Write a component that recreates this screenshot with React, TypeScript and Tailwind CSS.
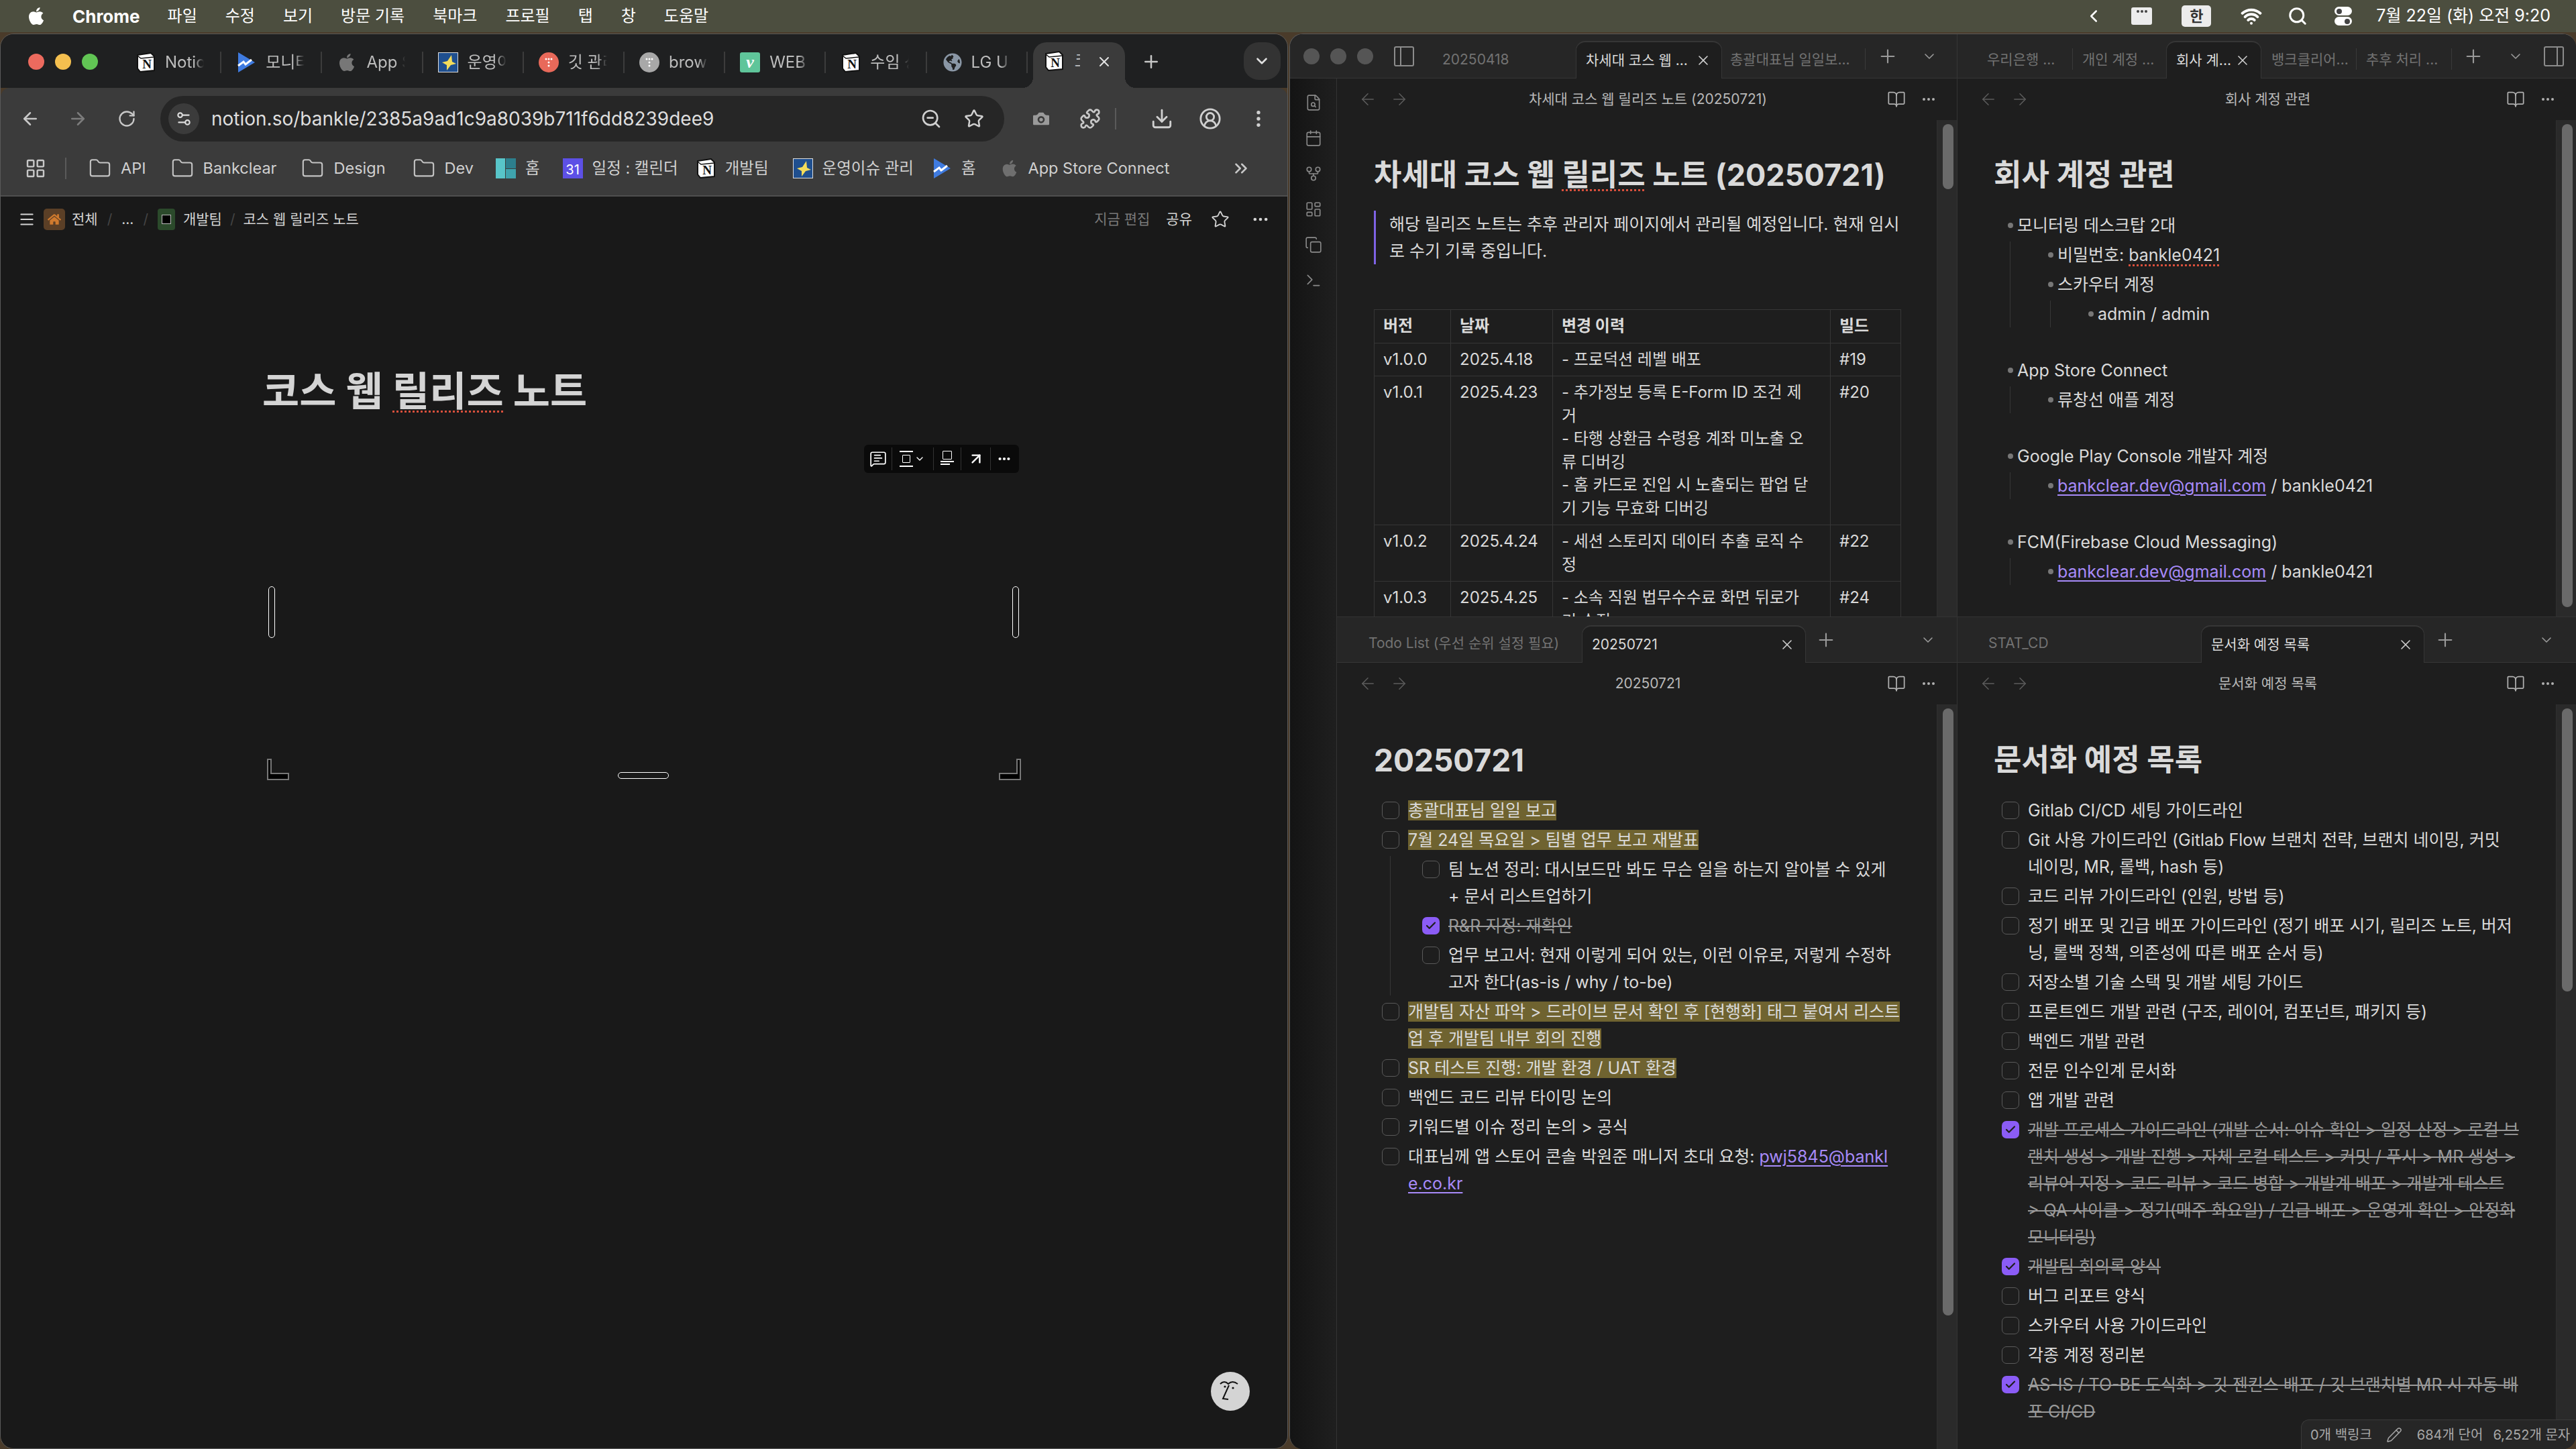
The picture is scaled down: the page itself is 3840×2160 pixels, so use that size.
import type { ReactNode } from "react";
import {
  ArrowLeft,
  ArrowRight,
  ArrowUpRight,
  BookOpen,
  Calendar,
  Camera,
  Check,
  ChevronDown,
  ChevronLeft,
  ChevronsRight,
  CircleUserRound,
  Copy,
  Download,
  Ellipsis,
  EllipsisVertical,
  FileSearch,
  Folder,
  GitFork,
  LayoutDashboard,
  LayoutGrid,
  Menu,
  MessageSquareText,
  Pencil,
  Plus,
  Puzzle,
  RotateCw,
  Search,
  Settings2,
  Star,
  Terminal,
  Wifi,
  X,
  ZoomOut,
} from "lucide-react";
import { FaApple, FaGlobeAmericas, FaHome } from "react-icons/fa";

const NotionIcon = ({ size = 30 }: { size?: number }) => (
  <svg width={size} height={size} viewBox="0 0 30 30" className="shrink-0">
    <path d="M3 4 L23 1 L28 6 V27 L7 29 L3 24 Z" fill="#fff" stroke="#111" strokeWidth="2" />
    <path d="M3 5 L8 9 L28 7" fill="none" stroke="#111" strokeWidth="1.5" />
    <text x="17" y="24" textAnchor="middle" fontFamily="Liberation Serif, serif" fontWeight="700" fontSize="19" fill="#111">
      N
    </text>
  </svg>
);

const MonitorIcon = ({ size = 30 }: { size?: number }) => (
  <svg width={size} height={size} viewBox="0 0 30 30" className="shrink-0">
    <path d="M3 0 L28 15 L3 30 Z" fill="#3f7be0" />
    <path d="M3 20 L11 14 L14 18 L23 11" fill="none" stroke="#fff" strokeWidth="3" />
  </svg>
);

const StarImageIcon = ({ size = 30 }: { size?: number }) => (
  <svg width={size} height={size} viewBox="0 0 30 30" className="shrink-0">
    <rect x="0.5" y="0.5" width="29" height="29" fill="#1f4f8f" stroke="#ddd" />
    <path d="M20 4 L21 14 L27 17 L19 19 L13 27 L13 19 L6 15 L14 13 Z" fill="#f4dc5a" />
  </svg>
);

const DotsFavicon = ({ color }: { color: string }) => (
  <svg width={30} height={30} viewBox="0 0 30 30" className="shrink-0">
    <circle cx="15" cy="15" r="15" fill={color} />
    <g fill="#fff">
      <circle cx="11" cy="10" r="1.5" />
      <circle cx="15" cy="10" r="1.5" />
      <circle cx="19" cy="10" r="1.5" />
      <circle cx="15" cy="15" r="1.5" />
      <circle cx="15" cy="20" r="1.5" />
    </g>
  </svg>
);

const tabs: { icon: ReactNode; label: string }[] = [
  { icon: <NotionIcon />, label: "Notion" },
  { icon: <MonitorIcon />, label: "모니터링" },
  { icon: <FaApple size={30} color="#777" className="shrink-0" />, label: "App Store" },
  { icon: <StarImageIcon />, label: "운영이슈" },
  { icon: <DotsFavicon color="#e8695a" />, label: "깃 관리" },
  { icon: <DotsFavicon color="#a8a8a8" />, label: "browser" },
  {
    icon: (
      <span className="flex h-[30px] w-[30px] shrink-0 items-center justify-center rounded-[3px] bg-[#5fc59a] font-['Liberation_Serif'] text-[26px] leading-none font-bold text-white italic">
        v
      </span>
    ),
    label: "WEB",
  },
  { icon: <NotionIcon />, label: "수임 상담" },
  { icon: <FaGlobeAmericas size={28} color="#8a97a6" className="shrink-0" />, label: "LG U+" },
];

const bookmarks: { icon: ReactNode; label: string; gap: string }[] = [
  { icon: <Folder size={34} strokeWidth={1.5} color="#c4c4c4" />, label: "API", gap: "mr-[37px]" },
  { icon: <Folder size={34} strokeWidth={1.5} color="#c4c4c4" />, label: "Bankclear", gap: "mr-[37px]" },
  { icon: <Folder size={34} strokeWidth={1.5} color="#c4c4c4" />, label: "Design", gap: "mr-[40px]" },
  { icon: <Folder size={34} strokeWidth={1.5} color="#c4c4c4" />, label: "Dev", gap: "mr-[33px]" },
  {
    icon: (
      <span className="grid h-[30px] w-[30px] grid-cols-2 gap-[1px] bg-[#3c3c3c]">
        <span className="row-span-2 bg-[#58c5c9]" />
        <span className="bg-[#2d7f8d]" />
        <span className="bg-[#3fa3ad]" />
      </span>
    ),
    label: "홈",
    gap: "mr-[34px]",
  },
  {
    icon: (
      <span className="flex h-[30px] w-[30px] items-end justify-center bg-[#5d50e6] pb-[1px] font-['Inter'] text-[20px] leading-[24px] text-white">
        31
      </span>
    ),
    label: "일정 : 캘린더",
    gap: "mr-[26px]",
  },
  { icon: <NotionIcon />, label: "개발팀", gap: "mr-[36px]" },
  { icon: <StarImageIcon />, label: "운영이슈 관리", gap: "mr-[27px]" },
  { icon: <MonitorIcon />, label: "홈", gap: "mr-[36px]" },
  { icon: <FaApple size={28} color="#6f6f6f" />, label: "App Store Connect", gap: "" },
];

const menuItems = ["파일", "수정", "보기", "방문 기록", "북마크", "프로필", "탭", "창", "도움말"];

const MenuBar = () => (
  <header className="flex h-[48px] shrink-0 items-center bg-[#4c4e3f] pr-[38px] pl-[39px] text-[24px] text-white">
    <FaApple size={30} />
    <span className="ml-[39px] text-[26px] font-bold">Chrome</span>
    <nav className="ml-[41px] flex gap-[42px]">
      {menuItems.map((m) => (
        <span key={m}>{m}</span>
      ))}
    </nav>
    <div className="ml-auto flex items-center">
      <ChevronLeft size={30} strokeWidth={2} />
      <span className="ml-[41px] flex h-[26px] w-[31px] items-start justify-center gap-[2px] rounded-[3px] bg-[#ececec] pt-[4px]">
        <i className="h-[4px] w-[4px] rounded-full bg-[#444]" />
        <i className="h-[4px] w-[4px] rounded-full bg-[#444]" />
        <i className="h-[4px] w-[4px] rounded-full bg-[#444]" />
      </span>
      <span className="ml-[44px] flex h-[32px] w-[44px] items-center justify-center rounded-[5px] bg-[#ececec] text-[22px] font-semibold text-[#333]">
        한
      </span>
      <Wifi size={32} strokeWidth={3} className="ml-[44px]" />
      <Search size={30} strokeWidth={2.4} className="ml-[38px]" />
      <span className="ml-[40px] flex flex-col gap-[2px]">
        <i className="flex h-[13px] w-[26px] items-center justify-start rounded-full bg-white pl-[3px]">
          <b className="h-[8px] w-[8px] rounded-full bg-[#444]" />
        </i>
        <i className="flex h-[13px] w-[26px] items-center justify-end rounded-full bg-white pr-[3px]">
          <b className="h-[8px] w-[8px] rounded-full bg-[#444]" />
        </i>
      </span>
      <span className="ml-[36px] text-[25px]">7월 22일 (화) 오전 9:20</span>
    </div>
  </header>
);

const BrowserTabs = () => (
  <div className="flex h-[80px] shrink-0 bg-[#1f2021] pl-[41px]">
    <div className="mt-[29px] mr-[34px] flex h-[24px] gap-[16px]">
      <span className="h-[24px] w-[24px] rounded-full bg-[#ec6a5e]" />
      <span className="h-[24px] w-[24px] rounded-full bg-[#f4bf4f]" />
      <span className="h-[24px] w-[24px] rounded-full bg-[#61c554]" />
    </div>
    {tabs.map((t, i) => (
      <div key={t.label} className="mt-[26px] flex h-[32px] w-[150.2px] items-center gap-[14px] border-r-2 border-[#3c3c3c] pl-[22px]">
        <span className={i === 8 ? "ml-[2px]" : ""}>{t.icon}</span>
        <span className="w-[58px] overflow-hidden text-[24px] whitespace-nowrap text-[#bdbdbd] [mask-image:linear-gradient(to_right,black_75%,transparent)]">
          {t.label}
        </span>
      </div>
    ))}
    <div className="relative mt-[12px] ml-[8px] flex h-[68px] w-[137px] items-start gap-[16px] rounded-t-[20px] bg-[#3b3b3b] pt-[13px] pl-[16px]">
      <span className="absolute bottom-0 -left-[16px] h-[16px] w-[16px] bg-[radial-gradient(circle_at_0_0,transparent_16px,#3b3b3b_16px)]" />
      <span className="absolute -right-[16px] bottom-0 h-[16px] w-[16px] bg-[radial-gradient(circle_at_100%_0,transparent_16px,#3b3b3b_16px)]" />
      <NotionIcon />
      <span className="w-[8px] overflow-hidden text-[24px] leading-[30px] text-[#bdbdbd]">코</span>
      <X size={24} strokeWidth={2} color="#e4e4e4" className="mt-[4px] ml-[8px]" />
    </div>
    <Plus size={30} strokeWidth={2} color="#c8c8c8" className="mt-[26px] ml-[24px]" />
    <span className="mt-[12px] ml-[123px] flex h-[56px] w-[55px] items-center justify-center rounded-[22px] bg-[#333]">
      <ChevronDown size={26} strokeWidth={2.4} color="#e0e0e0" />
    </span>
  </div>
);

const UrlRow = () => (
  <div className="flex h-[92px] items-center pl-[29px]">
    <ArrowLeft size={30} color="#c8c8c8" strokeWidth={2} />
    <ArrowRight size={30} color="#7c7c7c" strokeWidth={2} className="ml-[41px]" />
    <RotateCw size={28} color="#c8c8c8" strokeWidth={2} className="ml-[44px]" />
    <div className="ml-[36px] flex h-[68px] w-[1258px] items-center rounded-full bg-[#262626] pr-[30px] pl-[12px]">
      <span className="flex h-[46px] w-[46px] items-center justify-center rounded-full bg-[#3b3b3b]">
        <Settings2 size={26} color="#dcdcdc" />
      </span>
      <span className="ml-[18px] text-[28px] text-[#dedede]">notion.so/bankle/2385a9ad1c9a8039b711f6dd8239dee9</span>
      <ZoomOut size={32} color="#d0d0d0" className="ml-auto" />
      <Star size={30} color="#d0d0d0" className="ml-[33px]" />
    </div>
    <Camera size={32} color="#3b3b3b" fill="#9a9a9a" className="ml-[39px]" />
    <Puzzle size={32} color="#c8c8c8" className="ml-[41px]" />
    <span className="ml-[21px] h-[32px] w-[2px] bg-[#5a5a5a]" />
    <Download size={34} color="#d0d0d0" className="ml-[51px]" />
    <CircleUserRound size={34} color="#d0d0d0" className="ml-[38px]" />
    <EllipsisVertical size={32} color="#d0d0d0" className="ml-[39px]" />
  </div>
);

const BookmarkRow = () => (
  <div className="flex h-[56px] items-center pl-[36px]">
    <LayoutGrid size={32} color="#c8c8c8" strokeWidth={1.8} />
    <span className="mr-[33px] ml-[28px] h-[32px] w-[2px] bg-[#5a5a5a]" />
    {bookmarks.map((b, i) => (
      <span key={`${b.label}${i}`} className={`flex items-center gap-[14px] text-[23.5px] text-[#d0d0d0] ${b.gap}`}>
        {b.icon}
        {b.label}
      </span>
    ))}
    <ChevronsRight size={30} color="#c8c8c8" className="ml-[92px]" />
  </div>
);

const Handle = ({ className }: { className: string }) => (
  <div className={`absolute rounded-full border border-white ${className}`} />
);

const ToolbarSlot = ({ children, className }: { children: ReactNode; className: string }) => (
  <span className={`flex h-[34px] items-center justify-center border-r border-[#333] ${className}`}>{children}</span>
);

const NotionPage = () => (
  <main className="relative flex-1 bg-[#191919] text-[#d4d4d4]">
    <div className="flex h-[68px] items-center px-[26px] text-[21px]">
      <Menu size={26} strokeWidth={1.8} />
      <span className="ml-[12px] flex h-[32px] w-[32px] items-center justify-center rounded-[5px] bg-[#5b3f26]">
        <FaHome size={20} color="#cf7a2e" />
      </span>
      <span className="ml-[10px]">전체</span>
      <span className="mx-[14px] text-[#444]">/</span>
      <span>...</span>
      <span className="mx-[14px] text-[#444]">/</span>
      <span className="flex h-[32px] w-[26px] items-center justify-center rounded-[4px] bg-[#2b4a2b]">
        <span className="h-[14px] w-[14px] border border-[#bbb] bg-black" />
      </span>
      <span className="ml-[12px]">개발팀</span>
      <span className="mx-[12px] text-[#444]">/</span>
      <span>코스 웹 릴리즈 노트</span>
      <div className="ml-auto flex items-center">
        <span className="text-[#7a7a7a]">지금 편집</span>
        <span className="ml-[24px]">공유</span>
        <Star size={28} strokeWidth={1.6} className="ml-[28px]" />
        <Ellipsis size={28} className="ml-[32px]" />
      </div>
    </div>
    <h1 className="pt-[186px] pl-[390px] text-[60px] leading-[72px] font-bold">
      코스 웹{" "}
      <span className="underline decoration-[#d9503c] decoration-dotted decoration-[3px] underline-offset-[7px]">릴리즈</span> 노트
    </h1>

    <div className="absolute top-[370px] left-[1287px] flex h-[42px] w-[231px] items-center rounded-[6px] bg-[#0a0a0a] px-[2px] text-white">
      <ToolbarSlot className="w-[40px]">
        <MessageSquareText size={26} strokeWidth={1.6} />
      </ToolbarSlot>
      <ToolbarSlot className="w-[62px] gap-[2px]">
        <span className="flex h-[24px] w-[20px] flex-col items-center justify-between">
          <i className="h-[2px] w-[20px] bg-white" />
          <i className="h-[12px] w-[12px] rounded-[1px] border border-white" />
          <i className="h-[2px] w-[20px] bg-white" />
        </span>
        <ChevronDown size={16} />
      </ToolbarSlot>
      <ToolbarSlot className="w-[42px]">
        <span className="flex h-[24px] w-[20px] flex-col items-center gap-[2px]">
          <i className="h-[13px] w-[14px] rounded-[1px] border border-white" />
          <i className="h-[2px] w-[20px] bg-white" />
          <i className="h-[2px] w-[14px] self-start bg-white" />
        </span>
      </ToolbarSlot>
      <ToolbarSlot className="w-[44px]">
        <ArrowUpRight size={26} strokeWidth={2.2} />
      </ToolbarSlot>
      <span className="flex w-[40px] justify-center">
        <Ellipsis size={22} strokeWidth={2.6} />
      </span>
    </div>

    <Handle className="top-[581px] left-[399px] h-[77px] w-[10px]" />
    <Handle className="top-[581px] left-[1508px] h-[77px] w-[10px]" />
    <Handle className="top-[858px] left-[920px] h-[10px] w-[76px]" />
    <svg className="absolute top-[838px] left-[397px]" width="34" height="32" viewBox="0 0 34 32">
      <path d="M1 1 H6 V22 H32 V31 H1 Z" fill="#000" stroke="#777" strokeWidth="2" />
    </svg>
    <svg className="absolute top-[838px] left-[1487px]" width="34" height="32" viewBox="0 0 34 32">
      <path d="M33 1 H28 V22 H2 V31 H33 Z" fill="#000" stroke="#777" strokeWidth="2" />
    </svg>

    <div className="absolute right-[56px] bottom-[56px] flex h-[58px] w-[58px] items-center justify-center rounded-full bg-[#d4d4d4]">
      <svg width="34" height="34" viewBox="0 0 34 34" fill="none" stroke="#111" strokeWidth="2">
        <path d="M2 6 Q8 0 14 6 Q20 0 28 6" />
        <path d="M15 8 L6 28 L14 29" />
        <circle cx="9" cy="10" r="1.6" fill="#111" stroke="none" />
        <circle cx="21" cy="12" r="1.6" fill="#111" stroke="none" />
      </svg>
    </div>
  </main>
);

const BrowserWindow = () => (
  <section className="flex h-full w-[1920px] shrink-0 flex-col overflow-hidden rounded-t-[20px] rounded-b-[20px] border border-[#5a5a5a]">
    <BrowserTabs />
    <div className="h-[162px] shrink-0 rounded-t-[14px] border-b-2 border-[#4f4f4f] bg-[#3b3b3b]">
      <UrlRow />
      <BookmarkRow />
    </div>
    <NotionPage />
  </section>
);

const TabLabel = ({ children, className = "" }: { children: ReactNode; className?: string }) => (
  <span className={`mt-[10px] text-[21px] whitespace-nowrap text-[#727272] ${className}`}>{children}</span>
);

const ActiveTab = ({ label, className }: { label: string; className: string }) => (
  <div className={`flex h-[56px] items-center justify-between self-end rounded-t-[14px] border-x border-t-2 border-[#363636] bg-[#1e1e1e] -mb-px pr-[15px] pl-[14px] ${className}`}>
    <span className="text-[21px] whitespace-nowrap text-[#dadada]">{label}</span>
    <X size={24} strokeWidth={1.6} color="#cfcfcf" />
  </div>
);

const Sep = ({ className = "" }: { className?: string }) => <span className={`mt-[8px] h-[32px] w-px bg-[#3a3a3a] ${className}`} />;

const NavRow = ({ title }: { title: string }) => (
  <div className="flex h-[62px] shrink-0 items-center pr-[30px] pl-[32px]">
    <ArrowLeft size={28} strokeWidth={1.3} color="#5c5c5c" />
    <ArrowRight size={28} strokeWidth={1.3} color="#5c5c5c" className="ml-[19px]" />
    <span className="flex-1 text-center text-[21px] text-[#b8b8b8]">{title}</span>
    <BookOpen size={28} strokeWidth={1.5} color="#b0b0b0" />
    <Ellipsis size={24} strokeWidth={2} color="#b0b0b0" className="ml-[22px]" />
  </div>
);

const Scroll = ({ thumb }: { thumb: string }) => (
  <div className="w-[30px] shrink-0 border-l border-[#2f2f2f] bg-[#2a2a2a] pt-[6px] pl-[8px]">
    <div className={`w-[16px] rounded-full bg-[#6a6a6a] ${thumb}`} />
  </div>
);

const PageTitle = ({ children, className = "mb-[25px] text-[45px]" }: { children: ReactNode; className?: string }) => (
  <h1 className={`leading-[60px] font-bold text-[#dadada] ${className}`}>{children}</h1>
);

const misspelled = "underline decoration-[#d9503c] decoration-dotted decoration-[3px] underline-offset-[5px]";

const rows = [
  { v: "v1.0.0", d: "2025.4.18", c: ["- 프로덕션 레벨 배포"], b: "#19" },
  {
    v: "v1.0.1",
    d: "2025.4.23",
    c: [
      "- 추가정보 등록 E-Form ID 조건 제",
      "거",
      "- 타행 상환금 수령용 계좌 미노출 오",
      "류 디버깅",
      "- 홈 카드로 진입 시 노출되는 팝업 닫",
      "기 기능 무효화 디버깅",
    ],
    b: "#20",
  },
  { v: "v1.0.2", d: "2025.4.24", c: ["- 세션 스토리지 데이터 추출 로직 수", "정"], b: "#22" },
  { v: "v1.0.3", d: "2025.4.25", c: ["- 소속 직원 법무수수료 화면 뒤로가", "기 수정"], b: "#24" },
];

const cell = "border border-[#363636] px-[13px] py-[7px] align-top";

const ReleaseNote = () => (
  <div className="flex-1 overflow-hidden pt-[52px] pl-[55px]">
    <PageTitle className="mb-[23px] text-[45px]">
      차세대 코스 웹 <span className={misspelled}>릴리즈</span> 노트 (20250721)
    </PageTitle>
    <blockquote className="w-[785px] border-l-[3px] border-[#7f63e6] pl-[20px] text-[25px] leading-[40px] whitespace-nowrap text-[#dadada]">
      해당 릴리즈 노트는 추후 관리자 페이지에서 관리될 예정입니다. 현재 임시
      <br />로 수기 기록 중입니다.
    </blockquote>
    <table className="mt-[67px] w-[785px] table-fixed border-collapse text-[24px] leading-[34.5px] whitespace-nowrap text-[#dadada]">
      <colgroup>
        <col className="w-[114px]" />
        <col className="w-[152px]" />
        <col className="w-[414px]" />
        <col className="w-[105px]" />
      </colgroup>
      <thead>
        <tr className="font-bold">
          <th className={`${cell} text-left`}>버전</th>
          <th className={`${cell} text-left`}>날짜</th>
          <th className={`${cell} text-left`}>변경 이력</th>
          <th className={`${cell} text-left`}>빌드</th>
        </tr>
      </thead>
      <tbody>
        {rows.map((r) => (
          <tr key={r.v}>
            <td className={cell}>{r.v}</td>
            <td className={cell}>{r.d}</td>
            <td className={cell}>
              {r.c.map((line) => (
                <div key={line}>{line}</div>
              ))}
            </td>
            <td className={cell}>{r.b}</td>
          </tr>
        ))}
      </tbody>
    </table>
  </div>
);

const Bullet = ({ children, nested }: { children: ReactNode; nested?: ReactNode }) => (
  <li>
    <div className="relative mb-[4px] pl-[14px]">
      <i className="absolute top-[16px] left-0 h-[8px] w-[8px] rounded-full bg-[#777]" />
      {children}
    </div>
    {nested && <ul className="ml-[3px] border-l border-[#363636] pl-[56px]">{nested}</ul>}
  </li>
);

const accountLink = "text-[#a88bfa] underline underline-offset-[4px]";

const AccountNote = () => (
  <div className="flex-1 overflow-hidden pt-[52px] pl-[54px] text-[25px] leading-[40px] text-[#dadada]">
    <PageTitle>회사 계정 관련</PageTitle>
    <ul className="ml-[21px]">
      <Bullet
        nested={
          <>
            <Bullet>
              비밀번호: <span className={misspelled}>bankle0421</span>
            </Bullet>
            <Bullet nested={<Bullet>admin / admin</Bullet>}>스카우터 계정</Bullet>
          </>
        }
      >
        모니터링 데스크탑 2대
      </Bullet>
      <div className="h-[40px]" />
      <Bullet nested={<Bullet>류창선 애플 계정</Bullet>}>App Store Connect</Bullet>
      <div className="h-[40px]" />
      <Bullet
        nested={
          <Bullet>
            <span className={accountLink}>bankclear.dev@gmail.com</span> / bankle0421
          </Bullet>
        }
      >
        Google Play Console 개발자 계정
      </Bullet>
      <div className="h-[40px]" />
      <Bullet
        nested={
          <Bullet>
            <span className={accountLink}>bankclear.dev@gmail.com</span> / bankle0421
          </Bullet>
        }
      >
        FCM(Firebase Cloud Messaging)
      </Bullet>
    </ul>
  </div>
);

const Todo = ({
  children,
  done,
  nested,
}: {
  children: ReactNode;
  done?: boolean;
  nested?: ReactNode;
}) => (
  <div>
    <div className="mb-[4px] flex gap-[13px]">
      {done ? (
        <span className="mt-[7px] flex h-[26px] w-[26px] shrink-0 items-center justify-center rounded-[7px] bg-[#8b5cf6]">
          <Check size={18} strokeWidth={3} color="#1e1e1e" />
        </span>
      ) : (
        <span className="mt-[7px] h-[26px] w-[26px] shrink-0 rounded-[7px] border border-[#5a5a5a]" />
      )}
      <div className={`whitespace-nowrap ${done ? "text-[#9a9a9a] line-through" : ""}`}>{children}</div>
    </div>
    {nested && <div className="ml-[12px] border-l border-[#363636] pl-[47px]">{nested}</div>}
  </div>
);

const Mark = ({ children }: { children: ReactNode }) => (
  <mark className="bg-[#6f6330] text-[#dadada] [box-decoration-break:clone]">{children}</mark>
);

const DailyNote = () => (
  <div className="flex-1 overflow-hidden pt-[53px] pl-[55px] text-[25px] leading-[40px] text-[#dadada]">
    <PageTitle className="mb-[25px] text-[46px]">20250721</PageTitle>
    <div className="ml-[12px]">
      <Todo>
        <Mark>총괄대표님 일일 보고</Mark>
      </Todo>
      <Todo
        nested={
          <>
            <Todo>
              팀 노션 정리: 대시보드만 봐도 무슨 일을 하는지 알아볼 수 있게
              <br />+ 문서 리스트업하기
            </Todo>
            <Todo done>R&amp;R 지정: 재확인</Todo>
            <Todo>
              업무 보고서: 현재 이렇게 되어 있는, 이런 이유로, 저렇게 수정하
              <br />
              고자 한다(as-is / why / to-be)
            </Todo>
          </>
        }
      >
        <Mark>7월 24일 목요일 &gt; 팀별 업무 보고 재발표</Mark>
      </Todo>
      <Todo>
        <Mark>
          개발팀 자산 파악 &gt; 드라이브 문서 확인 후 [현행화] 태그 붙여서 리스트
          <br />
          업 후 개발팀 내부 회의 진행
        </Mark>
      </Todo>
      <Todo>
        <Mark>SR 테스트 진행: 개발 환경 / UAT 환경</Mark>
      </Todo>
      <Todo>백엔드 코드 리뷰 타이밍 논의</Todo>
      <Todo>키워드별 이슈 정리 논의 &gt; 공식</Todo>
      <Todo>
        대표님께 앱 스토어 콘솔 박원준 매니저 초대 요청: <span className={accountLink}>pwj5845@bankl</span>
        <br />
        <span className={accountLink}>e.co.kr</span>
      </Todo>
    </div>
  </div>
);

const docItems: { lines: string[]; done?: boolean }[] = [
  { lines: ["Gitlab CI/CD 세팅 가이드라인"] },
  { lines: ["Git 사용 가이드라인 (Gitlab Flow 브랜치 전략, 브랜치 네이밍, 커밋", "네이밍, MR, 롤백, hash 등)"] },
  { lines: ["코드 리뷰 가이드라인 (인원, 방법 등)"] },
  { lines: ["정기 배포 및 긴급 배포 가이드라인 (정기 배포 시기, 릴리즈 노트, 버저", "닝, 롤백 정책, 의존성에 따른 배포 순서 등)"] },
  { lines: ["저장소별 기술 스택 및 개발 세팅 가이드"] },
  { lines: ["프론트엔드 개발 관련 (구조, 레이어, 컴포넌트, 패키지 등)"] },
  { lines: ["백엔드 개발 관련"] },
  { lines: ["전문 인수인계 문서화"] },
  { lines: ["앱 개발 관련"] },
  {
    done: true,
    lines: [
      "개발 프로세스 가이드라인 (개발 순서: 이슈 확인 > 일정 산정 > 로컬 브",
      "랜치 생성 > 개발 진행 > 자체 로컬 테스트 > 커밋 / 푸시 > MR 생성 >",
      "리뷰어 지정 > 코드 리뷰 > 코드 병합 > 개발계 배포 > 개발계 테스트",
      "> QA 사이클 > 정기(매주 화요일) / 긴급 배포 > 운영계 확인 > 안정화",
      "모니터링)",
    ],
  },
  { done: true, lines: ["개발팀 회의록 양식"] },
  { lines: ["버그 리포트 양식"] },
  { lines: ["스카우터 사용 가이드라인"] },
  { lines: ["각종 계정 정리본"] },
  { done: true, lines: ["AS-IS / TO-BE 도식화 > 깃 젠킨스 배포 / 깃 브랜치별 MR 시 자동 배", "포 CI/CD"] },
];

const DocList = () => (
  <div className="flex-1 overflow-hidden pt-[53px] pl-[54px] text-[25px] leading-[40px] text-[#dadada]">
    <PageTitle>문서화 예정 목록</PageTitle>
    <div className="ml-[12px]">
      {docItems.map((item) => (
        <Todo key={item.lines[0]} done={item.done}>
          {item.lines.map((line) => (
            <div key={line}>{line}</div>
          ))}
        </Todo>
      ))}
    </div>
  </div>
);

const TabHeaderBottom = "border-b border-[#363636]";

const ObsidianWindow = () => (
  <section className="ml-[2px] flex h-full flex-1 flex-col overflow-hidden rounded-t-[20px] rounded-b-[20px] border-t border-l border-[#5a5a5a] bg-[#1e1e1e]">
    {/* window title row: tab strips of the two upper panes */}
    <div className="flex h-[66px] shrink-0">
      <div className={`flex w-[995px] items-center border-r border-[#333] bg-[#262626] pl-[20px] ${TabHeaderBottom}`}>
        <span className="h-[24px] w-[24px] rounded-full bg-[#555]" />
        <span className="ml-[16px] h-[24px] w-[24px] rounded-full bg-[#555]" />
        <span className="ml-[16px] h-[24px] w-[24px] rounded-full bg-[#555]" />
        <span className="ml-[31px] flex h-[30px] w-[30px] rounded-[3px] border-2 border-[#8c8c8c]">
          <i className="w-[9px] border-r-2 border-[#8c8c8c]" />
        </span>
        <TabLabel className="ml-[42px] w-[199px]">20250418</TabLabel>
        <ActiveTab label="차세대 코스 웹 ..." className="w-[218px]" />
        <TabLabel className="ml-[12px] w-[201px]">총괄대표님 일일보...</TabLabel>
        <Sep />
        <Plus size={32} strokeWidth={1.6} color="#9a9a9a" className="ml-[17px]" />
        <ChevronDown size={24} strokeWidth={1.6} color="#9a9a9a" className="ml-[34px]" />
      </div>
      <div className={`flex flex-1 items-center bg-[#262626] pl-[44px] ${TabHeaderBottom}`}>
        <TabLabel className="w-[127px]">우리은행 ...</TabLabel>
        <Sep />
        <TabLabel className="ml-[14px] w-[125px]">개인 계정 ...</TabLabel>
        <ActiveTab label="회사 계..." className="w-[142px]" />
        <TabLabel className="ml-[15px] w-[126px]">뱅크클리어...</TabLabel>
        <Sep />
        <TabLabel className="ml-[14px] w-[127px]">추후 처리 ...</TabLabel>
        <Sep />
        <Plus size={32} strokeWidth={1.6} color="#9a9a9a" className="ml-[16px]" />
        <ChevronDown size={24} strokeWidth={1.6} color="#9a9a9a" className="ml-[35px]" />
        <span className="ml-[30px] flex h-[30px] w-[30px] justify-end rounded-[3px] border-2 border-[#8c8c8c]">
          <i className="w-[9px] border-l-2 border-[#8c8c8c]" />
        </span>
      </div>
    </div>

    <div className="flex min-h-0 flex-1">
      {/* ribbon */}
      <aside className="flex w-[70px] shrink-0 flex-col items-center gap-[27px] border-r border-[#333] bg-linear-to-r from-[#141414] to-[#1f1f1f] pt-[23px] text-[#8a8a8a]">
        <FileSearch size={26} strokeWidth={1.5} />
        <Calendar size={26} strokeWidth={1.5} />
        <GitFork size={26} strokeWidth={1.5} />
        <LayoutDashboard size={26} strokeWidth={1.5} />
        <Copy size={26} strokeWidth={1.5} />
        <Terminal size={26} strokeWidth={1.5} />
      </aside>

      <div className="grid min-w-0 flex-1 grid-cols-[925px_1fr] grid-rows-[803px_1fr]">
        <div className="flex min-h-0 flex-col overflow-hidden border-r border-b border-[#333]">
          <NavRow title="차세대 코스 웹 릴리즈 노트 (20250721)" />
          <div className="flex min-h-0 flex-1">
            <ReleaseNote />
            <Scroll thumb="h-[97px]" />
          </div>
        </div>
        <div className="flex min-h-0 flex-col overflow-hidden border-b border-[#333]">
          <NavRow title="회사 계정 관련" />
          <div className="flex min-h-0 flex-1">
            <AccountNote />
            <Scroll thumb="h-[720px]" />
          </div>
        </div>
        <div className="flex min-h-0 flex-col overflow-hidden border-r border-[#333]">
          <div className={`flex h-[68px] shrink-0 items-center bg-[#262626] pl-[47px] ${TabHeaderBottom}`}>
            <TabLabel className="w-[318px]">Todo List (우선 순위 설정 필요)</TabLabel>
            <ActiveTab label="20250721" className="w-[334px]" />
            <Plus size={32} strokeWidth={1.6} color="#9a9a9a" className="ml-[14px]" />
            <ChevronDown size={24} strokeWidth={1.6} color="#9a9a9a" className="ml-[124px]" />
          </div>
          <NavRow title="20250721" />
          <div className="flex min-h-0 flex-1">
            <DailyNote />
            <Scroll thumb="h-[905px]" />
          </div>
        </div>
        <div className="relative flex min-h-0 flex-col overflow-hidden">
          <div className={`flex h-[68px] shrink-0 items-center bg-[#262626] pl-[46px] ${TabHeaderBottom}`}>
            <TabLabel className="w-[317px]">STAT_CD</TabLabel>
            <ActiveTab label="문서화 예정 목록" className="w-[333px]" />
            <Plus size={32} strokeWidth={1.6} color="#9a9a9a" className="ml-[15px]" />
            <ChevronDown size={24} strokeWidth={1.6} color="#9a9a9a" className="ml-[123px]" />
          </div>
          <NavRow title="문서화 예정 목록" />
          <div className="flex min-h-0 flex-1">
            <DocList />
            <Scroll thumb="h-[422px]" />
          </div>
          <div className="absolute right-0 bottom-0 flex h-[44px] w-[410px] items-center rounded-tl-[12px] border-t border-l border-[#3a3a3a] bg-[#262626] pl-[13px] text-[20px] whitespace-nowrap text-[#a8a8a8]">
            <span>0개 백링크</span>
            <Pencil size={24} strokeWidth={1.5} className="ml-[21px]" />
            <span className="ml-[22px]">684개 단어</span>
            <span className="ml-[15px]">6,252개 문자</span>
          </div>
        </div>
      </div>
    </div>
  </section>
);

const App = () => (
  <div className="flex h-[2160px] w-[3840px] flex-col overflow-hidden bg-[#4a3b2a] font-['Inter','Noto_Sans_CJK_KR',sans-serif]">
    <MenuBar />
    <div className="flex min-h-0 flex-1 pt-[2px]">
      <BrowserWindow />
      <ObsidianWindow />
    </div>
  </div>
);

export default App;
